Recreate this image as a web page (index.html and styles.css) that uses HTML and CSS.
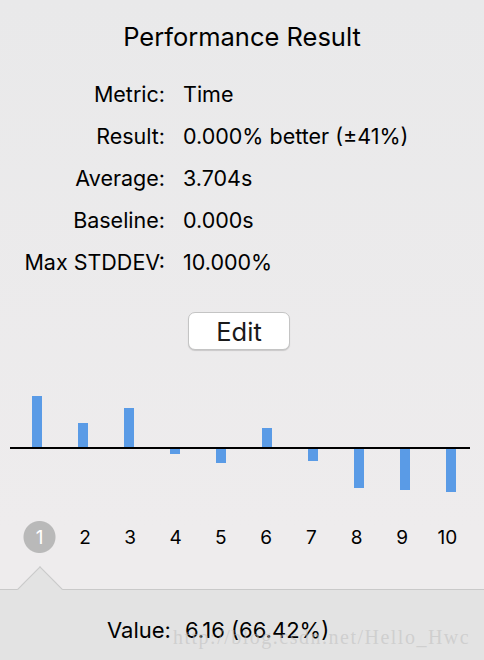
FILE: index.html
```html
<!DOCTYPE html>
<html lang="en">
  <head>
    <meta charset="UTF-8" />
    <meta name="viewport" content="width=device-width, initial-scale=1.0" />
    <title>Performance Result</title>
    <link rel="stylesheet" href="styles.css">
  </head>

  <body>
    <div id="heading">
      <h1>Performance Result</h1>
    </div>

    <div id="details">
      <span class="label">Metric:</span><span class="value">Time</span>
      <span class="label">Result:</span><span class="value">0.000% better (±41%)</span>
      <span class="label">Average:</span><span class="value">3.704s</span>
      <span class="label">Baseline:</span><span class="value">0.000s</span>
      <span class="label">Max STDDEV:</span><span class="value">10.000%</span>
    </div>

    <div id="edit">
      <button>Edit</button>
    </div>

    <div id="chart">
      <div class="row pos">
        <div class="col"><div class="bar" style="height: 51px"></div></div>
        <div class="col"><div class="bar" style="height: 24px"></div></div>
        <div class="col"><div class="bar" style="height: 39px"></div></div>
        <div class="col"></div>
        <div class="col"></div>
        <div class="col"><div class="bar" style="height: 19px"></div></div>
        <div class="col"></div>
        <div class="col"></div>
        <div class="col"></div>
        <div class="col"></div>
      </div>
      <div class="axis"></div>
      <div class="row neg">
        <div class="col"></div>
        <div class="col"></div>
        <div class="col"></div>
        <div class="col"><div class="bar" style="height: 5px"></div></div>
        <div class="col"><div class="bar" style="height: 14px"></div></div>
        <div class="col"></div>
        <div class="col"><div class="bar" style="height: 12px"></div></div>
        <div class="col"><div class="bar" style="height: 39px"></div></div>
        <div class="col"><div class="bar" style="height: 41px"></div></div>
        <div class="col"><div class="bar" style="height: 43px"></div></div>
      </div>
    </div>

    <div id="runs">
      <span class="run selected">1</span>
      <span class="run">2</span>
      <span class="run">3</span>
      <span class="run">4</span>
      <span class="run">5</span>
      <span class="run">6</span>
      <span class="run">7</span>
      <span class="run">8</span>
      <span class="run">9</span>
      <span class="run">10</span>
    </div>

    <div id="panel">
      <div class="arrow"></div>
      <p class="reading"><span class="reading-label">Value:</span>6.16 (66.42%)</p>
      <span class="watermark">http://blog.csdn.net/Hello_Hwc</span>
    </div>
  </body>
</html>
```

FILE: styles.css
```css
html {
  background: #ebeaeb;
}

body {
  margin: 0;
  width: 484px;
  height: 660px;
  overflow: hidden;
  display: flex;
  flex-direction: column;
  font-family: "Inter", "Liberation Sans", sans-serif;
  color: #000;
  background: linear-gradient(#e9e9ea, #eeeced 80%);
}

#heading {
  text-align: center;
  padding-top: 22px;
}

#heading h1 {
  margin: 0;
  font-size: 25.5px;
  font-weight: 400;
  line-height: 30px;
}

#details {
  margin-top: 21px;
  display: grid;
  grid-template-columns: 165px auto;
  column-gap: 18px;
  font-size: 21.5px;
  line-height: 42px;
}

#details .label {
  text-align: right;
}

#edit {
  margin-top: 29px;
  display: flex;
  justify-content: center;
}

button {
  width: 102px;
  height: 38px;
  margin-right: 6px;
  border: 1px solid #c4c4c4;
  border-radius: 7px;
  background: #fff;
  box-shadow: 0 1px 1px rgba(0, 0, 0, 0.15);
  font-family: inherit;
  font-size: 25.5px;
  color: #1a1a1a;
}

#chart {
  margin-top: 46px;
}

#chart .row {
  display: flex;
  padding-left: 14px;
}

#chart .pos {
  height: 51px;
  align-items: flex-end;
}

#chart .neg {
  height: 44px;
  align-items: flex-start;
}

#chart .col {
  width: 46px;
  display: flex;
  justify-content: center;
}

#chart .bar {
  width: 10px;
  background: #5a9be6;
}

#chart .axis {
  margin: 0 14px 0 10px;
  height: 2px;
  background: #000;
}

#runs {
  margin-top: 28px;
  display: flex;
  padding-left: 17px;
  font-size: 19px;
}

.run {
  width: 45.3px;
  height: 32px;
  display: flex;
  justify-content: center;
  align-items: center;
}

.run.selected {
  color: #fff;
  background: radial-gradient(circle, #b9b9b9 15.5px, rgba(185, 185, 185, 0) 16.5px);
}

#panel {
  position: relative;
  margin-top: 36px;
  flex: 1;
  border-top: 1px solid #c9c9c9;
  background: #e3e3e3;
}

#panel .arrow {
  position: absolute;
  left: 24px;
  top: -17px;
  width: 31px;
  height: 31px;
  border-top: 1px solid #c9c9c9;
  border-left: 1px solid #c9c9c9;
  background: #e3e3e3;
  transform: rotate(45deg);
}

.reading {
  margin: 28px 0 0 107px;
  font-size: 22px;
  line-height: 24px;
}

.reading-label {
  margin-right: 14px;
}

.watermark {
  position: absolute;
  left: 173px;
  top: 36px;
  font-family: "Liberation Serif", serif;
  font-size: 20px;
  letter-spacing: 1.5px;
  color: rgba(190, 190, 190, 0.55);
}
```
